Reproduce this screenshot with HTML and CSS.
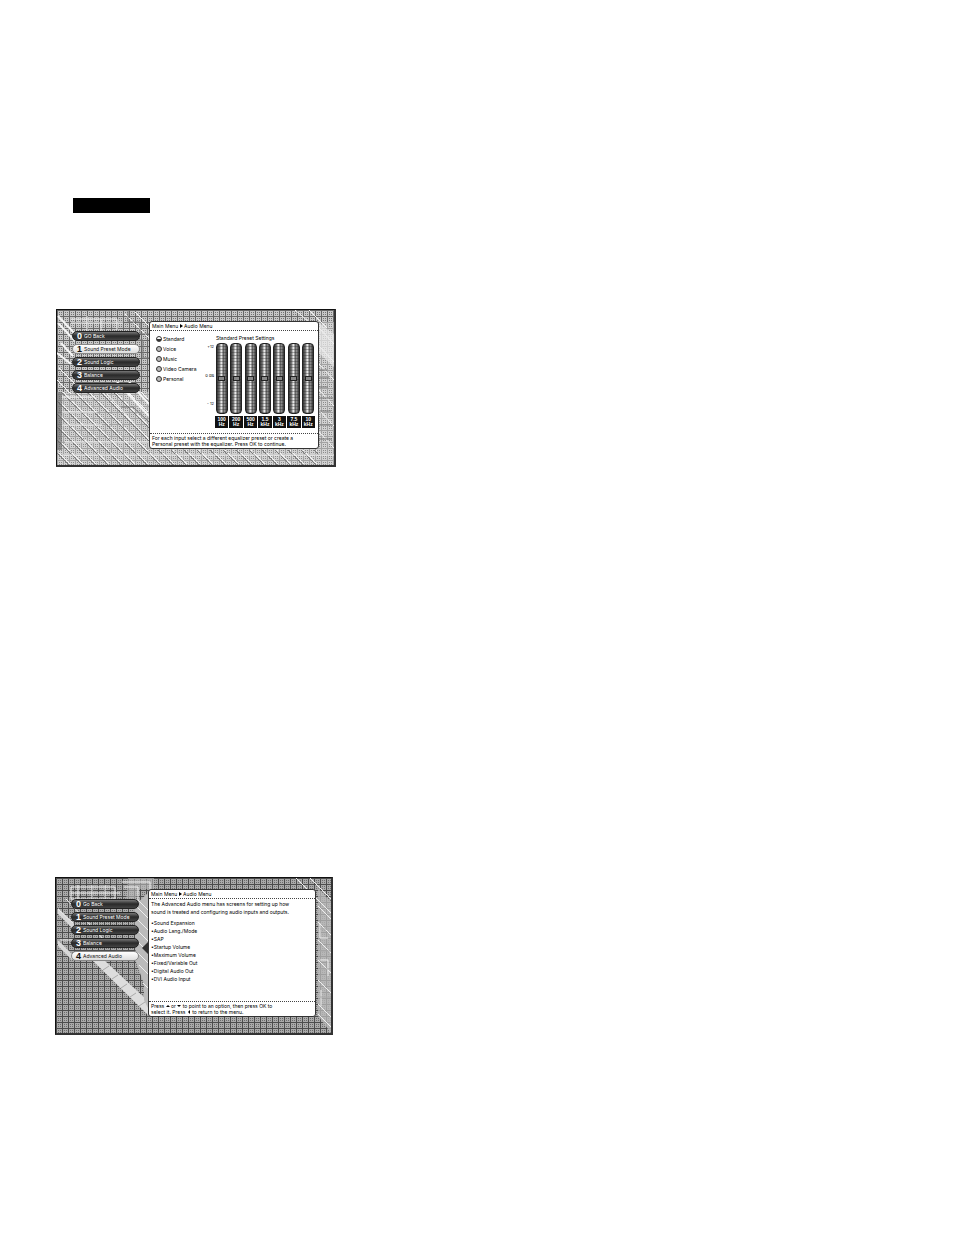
FILE: index.html
```
<!DOCTYPE html>
<html lang="en">
<head>
    <meta charset="UTF-8">
    <meta name="viewport" content="width=device-width, initial-scale=1.0">
    <title>Audio Menu</title>
    <link rel="stylesheet" href="styles.css">
</head>
<body>
    <main class="page">
        <div class="heading-bar"></div>

        <section class="screen screen-presets">
            <svg class="backdrop" viewBox="0 0 277 155" preserveAspectRatio="none" aria-hidden="true">
                <defs>
                    <pattern id="light-dots" width="6" height="6" patternUnits="userSpaceOnUse">
                        <rect width="6" height="6" fill="#d2d2d2"/>
                        <path d="M0 .5H6M.5 0V6" stroke="#a2a2a2"/>
                        <path d="M2 2h1v1H2zM4 2h1v1H4zM2 4h1v1H2zM4 4h1v1H4z" fill="#8a8a8a"/>
                    </pattern>
                    <pattern id="mid-grid" width="6" height="6" patternUnits="userSpaceOnUse">
                        <rect width="6" height="6" fill="#c8c8c8"/>
                        <path d="M0 .5H6M.5 0V6" stroke="#686868"/>
                        <path d="M2 2h1v1H2zM4 2h1v1H4zM2 4h1v1H2zM4 4h1v1H4z" fill="#737373"/>
                    </pattern>
                    <pattern id="slants" width="13" height="13" patternUnits="userSpaceOnUse">
                        <path d="M0 0L13 13" stroke="#777"/>
                        <path d="M2 0L13 11" stroke="#f7f7f7"/>
                    </pattern>
                </defs>
                <rect width="277" height="155" fill="url(#light-dots)"/>
                <rect width="277" height="82" fill="url(#mid-grid)"/>
                <path d="M0 82H92V140H277V155H0Z" fill="url(#slants)"/>
                <path d="M262 12H277V155H262Z" fill="url(#light-dots)"/>
                <path d="M0 82H5V140H0Z" fill="#666" opacity=".6"/>
                <g fill="none" stroke="#f4f4f4">
                    <path d="M1 6L22 28M1 13L18 31M4 33L16 46M0 43L14 54M60 72L92 106M72 72L92 94" stroke-width="2"/>
                    <path d="M2 58L22 78M0 70L14 84M50 84L92 130M68 4L92 28M78 2L92 16"/>
                    <path d="M14 9H60V20M14 13H66M30 6V21M44 9V21M5 87H38M5 102H40M5 115H45M8 132H92M5 145H277"/>
                    <path d="M238 0L252 12M252 0L270 18M262 18L277 34M262 36L277 52M262 54L277 70M262 80L277 96M262 100L277 116M262 122L277 138"/>
                </g>
                <path d="M262 13L277 24V57L262 43Z" fill="#eee" opacity=".65"/>
                <path d="M71 0V12H83V24H92M74 30H86V48H92M64 97H76L92 112" fill="none" stroke="#777"/>
                <path d="M262 60H270M262 68H272M262 77H271M262 88H276M262 101H274M262 115H276M262 129H275" stroke="#777"/>
            </svg>
            <nav class="menu">
                <button class="menu-item" type="button"><b>0</b><span>GO Back</span></button>
                <button class="menu-item active" type="button"><b>1</b><span>Sound Preset Mode</span></button>
                <button class="menu-item" type="button"><b>2</b><span>Sound Logic</span></button>
                <button class="menu-item" type="button"><b>3</b><span>Balance</span></button>
                <button class="menu-item" type="button"><b>4</b><span>Advanced Audio</span></button>
            </nav>
            <div class="panel">
                <div class="panel-title">Main Menu <svg class="crumb" viewBox="0 0 3 4"><path d="M0 0L3 2L0 4Z"/></svg> Audio Menu</div>
                <div class="panel-body presets-body">
                    <div class="presets">
                        <label><input type="radio" name="preset" checked>Standard</label>
                        <label><input type="radio" name="preset">Voice</label>
                        <label><input type="radio" name="preset">Music</label>
                        <label><input type="radio" name="preset">Video Camera</label>
                        <label><input type="radio" name="preset">Personal</label>
                    </div>
                    <div class="scale"><span>+12</span><span>0 dB</span><span>- 12</span></div>
                    <div class="equalizer">
                        <div class="equalizer-title">Standard Preset Settings</div>
                        <div class="bands">
                            <label class="band"><input type="range" min="-12" max="12" value="0"><span>100<br>Hz</span></label>
                            <label class="band"><input type="range" min="-12" max="12" value="0"><span>200<br>Hz</span></label>
                            <label class="band"><input type="range" min="-12" max="12" value="0"><span>500<br>Hz</span></label>
                            <label class="band"><input type="range" min="-12" max="12" value="0"><span>1.5<br>kHz</span></label>
                            <label class="band"><input type="range" min="-12" max="12" value="0"><span>3<br>kHz</span></label>
                            <label class="band"><input type="range" min="-12" max="12" value="0"><span>7.5<br>kHz</span></label>
                            <label class="band"><input type="range" min="-12" max="12" value="0"><span>10<br>kHz</span></label>
                        </div>
                    </div>
                </div>
                <div class="panel-help">For each input select a different equalizer preset or create a<br>Personal preset with the equalizer. Press OK to continue.</div>
            </div>
        </section>

        <section class="screen screen-advanced">
            <svg class="backdrop" viewBox="0 0 275 155" preserveAspectRatio="none" aria-hidden="true">
                <defs>
                    <pattern id="dark-grid" width="6" height="6" patternUnits="userSpaceOnUse">
                        <rect width="6" height="6" fill="#aaa"/>
                        <path d="M0 .5H6M.5 0V6" stroke="#4c4c4c"/>
                        <path d="M2 2h1v1H2zM4 2h1v1H4zM2 4h1v1H2zM4 4h1v1H4z" fill="#6c6c6c"/>
                    </pattern>
                </defs>
                <rect width="275" height="155" fill="url(#dark-grid)"/>
                <path d="M36 82L92 137V123L48 82Z" fill="#ddd"/>
                <path d="M2 30L18 46V52L2 36ZM2 62L16 76V82L2 68Z" fill="#d8d8d8"/>
                <path d="M78 28L93 14V132L88 122V106L80 84Z" fill="#bbb"/>
                <path d="M72 0H98V11H84L78 24H70Z" fill="#bbb" opacity=".6"/>
                <path d="M262 10L275 24V155L262 138Z" fill="#bbb" opacity=".75"/>
                <g fill="none" stroke="#eee">
                    <path d="M10 21L26 38L48 62M2 31L17 45M4 62L18 62M15 9H59V21H15ZM15 15H64M22 7V22M36 7V22M49 7V22M66 4H94V12M68 9H82V22L92 32"/>
                    <path d="M80 28L93 41M76 36L93 53M80 51L93 64M80 62L93 75M82 75L93 86M83 87L93 97M87 105L93 111"/>
                    <path d="M240 0L275 35M254 0L275 21M262 28L275 41M262 44L275 57M262 62L275 75M262 82L275 95M262 102L275 115M262 126L275 139M262 136L275 149"/>
                    <path d="M264 45V60H272M264 82H272V98M265 112V128"/>
                </g>
                <path d="M47 92L53 88M56 101L62 97M65 110L71 106M74 119L80 115M83 128L89 124M264 51H275M264 73H275M264 91H275M264 119H275" stroke="#aaa"/>
                <path d="M86 70L93 63V77Z" fill="#333"/>
            </svg>
            <nav class="menu">
                <button class="menu-item" type="button"><b>0</b><span>Go Back</span></button>
                <button class="menu-item" type="button"><b>1</b><span>Sound Preset Mode</span></button>
                <button class="menu-item" type="button"><b>2</b><span>Sound Logic</span></button>
                <button class="menu-item" type="button"><b>3</b><span>Balance</span></button>
                <button class="menu-item active" type="button"><b>4</b><span>Advanced Audio</span></button>
            </nav>
            <div class="panel">
                <div class="panel-title">Main Menu <svg class="crumb" viewBox="0 0 3 4"><path d="M0 0L3 2L0 4Z"/></svg> Audio Menu</div>
                <div class="panel-body">
                    <p class="intro">The Advanced Audio menu has screens for setting up how<br>sound is treated and configuring audio inputs and outputs.</p>
                    <ul class="options">
                        <li>Sound Expansion</li>
                        <li>Audio Lang./Mode</li>
                        <li>SAP</li>
                        <li>Startup Volume</li>
                        <li>Maximum Volume</li>
                        <li>Fixed/Variable Out</li>
                        <li>Digital Audio Out</li>
                        <li>DVI Audio Input</li>
                    </ul>
                </div>
                <div class="panel-help">Press <svg class="arrow" viewBox="0 0 4 4"><path d="M0 3L2 1L4 3Z"/></svg> or <svg class="arrow" viewBox="0 0 4 4"><path d="M0 1L2 3L4 1Z"/></svg> to point to an option, then press OK to<br>select it. Press <svg class="arrow" viewBox="0 0 4 4"><path d="M3 0L1 2L3 4Z"/></svg> to return to the menu.</div>
            </div>
        </section>
    </main>
</body>
</html>
```
FILE: styles.css
```
* {
    box-sizing: border-box;
}
body {
    margin: 0;
    background-color: #fff;
    color: #000;
    font-family: Inter, Arial, sans-serif;
    font-size: 5px;
}
.page {
    padding: 198px 55px 200px;
}
.heading-bar {
    width: 77px;
    height: 15px;
    margin-left: 18px;
    background-color: #000;
}
.screen {
    position: relative;
    display: flex;
    align-items: flex-start;
    border: 1px solid #111;
    border-right: 2px solid #333;
    border-bottom: 2px solid #333;
}
.screen-presets {
    width: 280px;
    margin-top: 96px;
    margin-left: 1px;
    padding: 11px 15px 16px;
}
.screen-advanced {
    width: 278px;
    margin-top: 410px;
    padding: 11px 15px 16px;
}
.backdrop {
    position: absolute;
    inset: 0;
    width: 100%;
    height: 100%;
}
.menu {
    position: relative;
    display: flex;
    flex-direction: column;
    gap: 3px;
    width: 68px;
    margin-top: 10px;
    margin-right: 9px;
}
.menu-item {
    display: flex;
    align-items: center;
    gap: 2px;
    height: 10px;
    padding: 0 4px;
    border: 1px solid #222;
    border-radius: 5px;
    background: linear-gradient(#777, #292929 50%, #444);
    color: #fff;
    font-family: inherit;
    font-size: 5px;
    line-height: 8px;
    white-space: nowrap;
    cursor: pointer;
}
.menu-item b {
    width: 5px;
    font-family: "Liberation Sans", Arial, sans-serif;
    font-size: 9px;
}
.menu-item.active {
    border-color: #888;
    background: linear-gradient(#fff, #ddd);
    color: #111;
}
.panel {
    position: relative;
    display: flex;
    flex: 1;
    flex-direction: column;
    min-height: 128px;
    border: 1px solid #333;
    border-radius: 3px;
    background-color: #fff;
}
.panel-title {
    height: 9px;
    padding-left: 2px;
    border-bottom: 1px dotted #444;
    line-height: 8px;
}
.crumb {
    width: 3px;
    height: 4px;
}
.panel-body {
    flex: 1;
}
.presets-body {
    display: flex;
    padding: 3px 3px 0 6px;
}
.presets {
    width: 46px;
}
.presets label {
    display: flex;
    align-items: center;
    gap: 1px;
    height: 10px;
    white-space: nowrap;
}
.presets input {
    appearance: none;
    flex: none;
    width: 6px;
    height: 6px;
    margin: 0;
    border: 1px solid #333;
    border-radius: 50%;
    background-color: #bbb;
}
.presets input:checked {
    background: linear-gradient(#fff 50%, #333 50%);
}
.scale {
    display: flex;
    flex-direction: column;
    justify-content: space-between;
    width: 12px;
    height: 62px;
    margin-top: 10px;
    margin-right: 1px;
    font-size: 4px;
    line-height: 5px;
    text-align: right;
}
.equalizer {
    flex: 1;
}
.equalizer-title {
    padding-left: 1px;
    line-height: 9px;
}
.bands {
    display: grid;
    grid-template-columns: repeat(7, 1fr);
    gap: 1px;
}
.band {
    display: flex;
    flex-direction: column;
    align-items: center;
    gap: 2px;
}
.band input {
    appearance: none;
    writing-mode: vertical-lr;
    direction: rtl;
    width: 12px;
    height: 71px;
    margin: 0;
    border: 1px solid #222;
    border-radius: 4px;
    background:
        repeating-linear-gradient(#0000 0 2px, #2225 2px 3px),
        linear-gradient(90deg, #333, #777 25%, #ddd 40%, #eee 50%, #555 60%, #888 75%, #333);
}
.band input::-webkit-slider-thumb {
    appearance: none;
    width: 7px;
    height: 5px;
    border: 1px solid #222;
    background-color: #888;
}
.band span {
    width: 100%;
    height: 12px;
    padding-top: 1px;
    background-color: #111;
    color: #fff;
    font-family: "Liberation Sans", Arial, sans-serif;
    font-size: 5px;
    font-weight: bold;
    line-height: 5px;
    text-align: center;
}
.panel-help {
    padding: 1px 2px;
    border-top: 1px dotted #444;
    line-height: 6px;
    white-space: nowrap;
}
.intro {
    margin: 1px 2px 3px;
    line-height: 8px;
    white-space: nowrap;
}
.options {
    margin: 0;
    padding: 0 2px;
    line-height: 8px;
    list-style: none;
}
.options li::before {
    content: "•";
}
.arrow {
    width: 4px;
    height: 4px;
}
```
